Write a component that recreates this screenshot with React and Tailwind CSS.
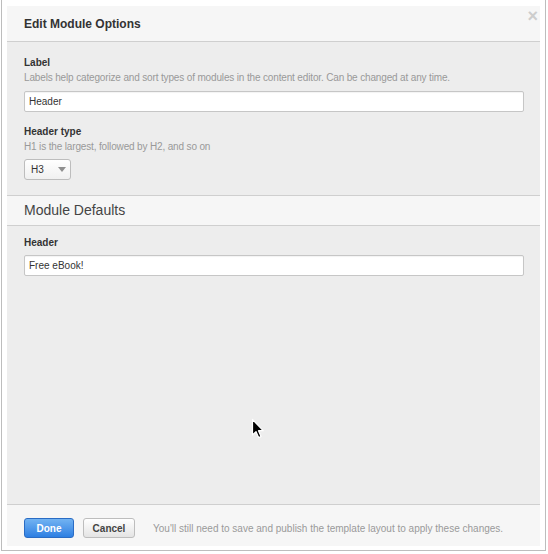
const font = { fontFamily: '"Liberation Sans", Arial, sans-serif' }

function Field({ label, hint, children, className = '' }) {
  return (
    <div className={className}>
      <div className="text-[10px] leading-[14px] font-bold text-[#333]">{label}</div>
      {hint && <div className="text-[10px] leading-[14px] tracking-[-0.15px] text-[#999] mt-[1px]">{hint}</div>}
      {children}
    </div>
  )
}

function TextInput({ value, className = '' }) {
  return (
    <div
      className={`h-[21px] w-[500px] bg-white border border-[#c6c6c6] rounded-[2px] pl-[4px] flex items-center text-[10px] text-[#333] shadow-[inset_0_1px_1px_rgba(0,0,0,0.05)] ${className}`}
    >
      {value}
    </div>
  )
}

function Cursor() {
  return (
    <svg className="absolute left-[251px] top-[418px]" width="14" height="22" viewBox="0 0 14 22">
      <path
        d="M1.5 1.5 L1.5 17 L5 13.6 L7.6 19.6 L10 18.6 L7.5 12.7 L12.2 12.7 Z"
        fill="#000"
        stroke="#fff"
        strokeWidth="1.2"
        strokeLinejoin="round"
      />
    </svg>
  )
}

export default function App() {
  return (
    <div className="w-[548px] h-[554px] bg-white relative" style={font}>
      <div className="ml-[1px] w-[545px] h-[551px] border-x border-b border-[#bdbdbd] pt-[6px] pl-[5px]">
        <div className="w-[533px] h-[540px] flex flex-col relative">
          {/* header */}
          <div className="h-[36px] bg-[#f6f6f6] border-b border-[#cfcfcf] flex items-center pl-[17px]">
            <span className="text-[12px] font-bold text-[#333]">Edit Module Options</span>
          </div>
          <span className="absolute right-[2px] top-[1px] text-[18px] leading-[18px] font-bold text-[#cdcdcd]">×</span>

          {/* body */}
          <div className="flex-1 bg-[#ededed] flex flex-col">
            <div className="px-[17px] pt-[14px] pb-[15px]">
              <Field
                label="Label"
                hint="Labels help categorize and sort types of modules in the content editor. Can be changed at any time."
              >
                <TextInput value="Header" className="mt-[6px]" />
              </Field>
              <Field label="Header type" hint="H1 is the largest, followed by H2, and so on" className="mt-[13px]">
                <div className="mt-[5px] h-[21px] w-[47px] rounded-[3px] border border-[#bdbdbd] bg-gradient-to-b from-white to-[#f0f0f0] flex items-center pl-[6px] text-[10px] text-[#333]">
                  <span>H3</span>
                  <svg className="ml-[14px]" width="8" height="5" viewBox="0 0 8 5">
                    <path d="M0 0 L8 0 L4 5 Z" fill="#8f8f8f" />
                  </svg>
                </div>
              </Field>
            </div>

            <div className="h-[31px] bg-[#f6f6f6] border-y border-[#cfcfcf] flex items-center pl-[17px]">
              <span className="text-[14px] text-[#444]">Module Defaults</span>
            </div>

            <div className="px-[17px] pt-[10px]">
              <Field label="Header">
                <TextInput value="Free eBook!" className="mt-[5px]" />
              </Field>
            </div>
          </div>

          {/* footer */}
          <div className="h-[42px] bg-[#f6f6f6] border-t border-[#cfcfcf] flex items-start pt-[13px] pl-[17px]">
            <button className="h-[20px] w-[50px] rounded-[3px] border border-[#2a6cc4] bg-gradient-to-b from-[#72b3f2] to-[#2d7fe2] text-white text-[10px] font-bold">
              Done
            </button>
            <button className="ml-[9px] h-[20px] w-[52px] rounded-[3px] border border-[#bdbdbd] bg-gradient-to-b from-white to-[#e4e4e4] text-[#444] text-[10px] font-bold">
              Cancel
            </button>
            <span className="ml-[18px] mt-[3px] text-[10px] text-[#9a9a9a]">
              You'll still need to save and publish the template layout to apply these changes.
            </span>
          </div>
        </div>
      </div>
      <Cursor />
    </div>
  )
}
